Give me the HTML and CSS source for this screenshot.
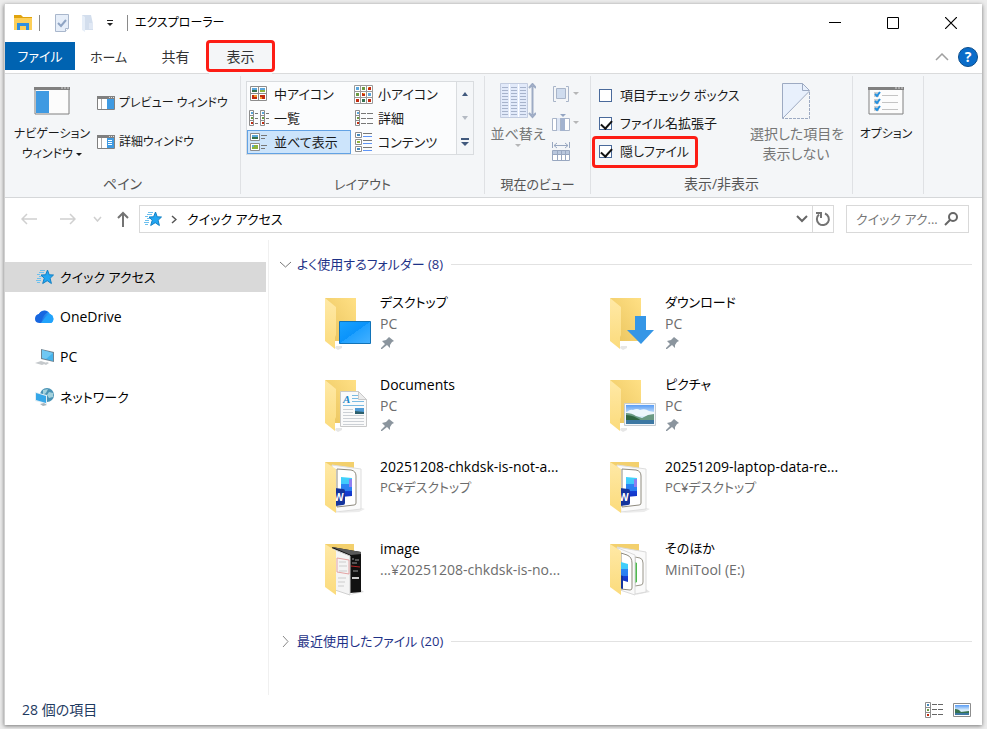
FILE: index.html
```html
<!DOCTYPE html>
<html lang="ja">
<head>
    <meta charset="UTF-8">
    <meta name="viewport" content="width=device-width, initial-scale=1.0">
    <title>エクスプローラー</title>
    <link rel="stylesheet" href="styles.css">
</head>
<body>
    <!-- shared icon shapes -->
    <svg class="defs" width="0" height="0" aria-hidden="true">
        <defs>
            <linearGradient id="back" x1="0" y1="1" x2="1" y2="0">
                <stop offset="0" stop-color="#e9c35c"/>
                <stop offset="1" stop-color="#ffe085"/>
            </linearGradient>
            <linearGradient id="flap" x1="0" y1="0" x2="0" y2="1">
                <stop offset="0" stop-color="#ffe9a6"/>
                <stop offset="1" stop-color="#fbdb7c"/>
            </linearGradient>
            <linearGradient id="screen" x1="0" y1="0" x2="1" y2="1">
                <stop offset="0" stop-color="#1aa3ff"/>
                <stop offset="0.5" stop-color="#0a93fb"/>
                <stop offset="0.5" stop-color="#1fa0ff"/>
                <stop offset="1" stop-color="#45b1ff"/>
            </linearGradient>
            <linearGradient id="sky" x1="0" y1="0" x2="0" y2="1">
                <stop offset="0" stop-color="#5a9df5"/>
                <stop offset="0.5" stop-color="#d8ecfa"/>
            </linearGradient>
            <linearGradient id="sheet" x1="0" y1="0" x2="0" y2="1">
                <stop offset="0" stop-color="#41d3fb"/>
                <stop offset="0.35" stop-color="#41c8fb"/>
                <stop offset="0.35" stop-color="#2b86f4"/>
                <stop offset="0.68" stop-color="#2b7df0"/>
                <stop offset="0.68" stop-color="#1741d6"/>
                <stop offset="1" stop-color="#1233c4"/>
            </linearGradient>
            <linearGradient id="cloud" x1="0" y1="0" x2="1" y2="0">
                <stop offset="0" stop-color="#1b55d8"/>
                <stop offset="1" stop-color="#2fb4ff"/>
            </linearGradient>
        </defs>
        <symbol id="folder" viewBox="0 0 48 54">
            <path d="M10 50l3 2 4-2v-2h-6z" fill="#e6e6e6"/>
            <path d="M0 0h31v43H10z" fill="url(#back)"/>
            <path d="M0 0l11 9v28l-1 2v12L0 43z" fill="url(#flap)"/>
        </symbol>
        <symbol id="folder-full" viewBox="0 0 48 54">
            <path d="M0 0h29v10H0z" fill="#f3d06d"/>
        </symbol>
        <symbol id="folder-flap" viewBox="0 0 48 54">
            <path d="M0 0l11 7v44L0 43z" fill="url(#flap)"/>
        </symbol>
        <symbol id="word" viewBox="0 0 48 54">
            <path d="M34 45l6 2-6 3-22 1z" fill="#ececec"/>
            <path d="M7 3l29 4v40l-25 3z" fill="#fafafa" stroke="#dedede"/>
            <path d="M12 7l14 1q5 1 5 6v27q0 2-2 2l-17 2z" fill="#fff" stroke="#8f8b7f"/>
            <path d="M16 15l11 1v18l-11 1z" fill="url(#sheet)"/>
            <path d="M24 17h3v8h-3z" fill="#8e7ff0"/>
            <path d="M10 26l8 1q2 0 2 2v12q0 2-2 2l-8 1z" fill="#14349d"/>
        </symbol>
        <symbol id="pin" viewBox="0 0 14 14">
            <path d="M8 1l5 4-2 1-2 3 0 3-3-3-5 4-1 0 0-1 4-4-3-3 4-1 2-2z" fill="#8b959e"/>
        </symbol>
        <symbol id="star" viewBox="0 0 18 16">
            <path d="M11.500 1l1.700 4.800 4.300.2-3.400 3.300 1.300 5.200-4.200-2.800-4.500 2.800 1.500-5.200L5 6l4.600-.2z" fill="#22a6f2" stroke="#1380c4"/>
            <path d="M4 1.500h5M3 3.500h5M1 5.500h3M3 7.500h3M1 9.500h4M0 11.500h5M1 13.500h3" stroke="#6dc0ee"/>
        </symbol>
        <symbol id="window" viewBox="0 0 36 28">
            <path d="M1 1h34v26H1z" fill="#fcfcfc" stroke="#808080"/>
            <path d="M0 0h36v3H0z" fill="#808080"/>
            <path d="M27 1h2M30 1h2M33 1h2" stroke="#d5d5d5"/>
        </symbol>
    </svg>

    <div class="window">
        <header class="titlebar">
            <svg width="20" height="18" viewBox="0 0 20 18">
                <path d="M1 1h7l2 2h9v3H1z" fill="#e0a30d"/>
                <path d="M1 4h18v12H1z" fill="#fdcf58"/>
                <path d="M4 16V9h12v7h-3v-4H7v4z" fill="#2f8fe0"/>
            </svg>
            <span class="divider first"></span>
            <button class="quick" aria-label="プロパティ">
                <svg width="16" height="18" viewBox="0 0 16 18">
                    <path d="M1.500.5h13v14l-3 3h-10z" fill="#e6eef9" stroke="#a9b7cc"/>
                    <path d="M11.500 17.500v-3h3" fill="#fff" stroke="#a9b7cc"/>
                    <path d="M4 9l3 3 5-6" fill="none" stroke="#8fa4c3" stroke-width="2"/>
                </svg>
            </button>
            <button class="quick" aria-label="新しいフォルダー">
                <svg width="14" height="18" viewBox="0 0 14 18">
                    <path d="M1 1h9l2 9v6H1z" fill="#d3deed"/>
                    <path d="M1 1l3 2v15l-3-2z" fill="#e6eef8"/>
                    <path d="M8 9h4v6H8z" fill="#e0e8f4"/>
                </svg>
            </button>
            <button class="quick" aria-label="カスタマイズ">
                <svg width="8" height="6" viewBox="0 0 8 6">
                    <path d="M1 .5h6" stroke="#222"/>
                    <path d="M1 3h6L4 6z" fill="#222"/>
                </svg>
            </button>
            <span class="divider"></span>
            <h1>エクスプローラー</h1>
            <div class="controls">
                <button aria-label="最小化"><svg width="12" height="12"><path d="M0 5.500h12" stroke="#000"/></svg></button>
                <button aria-label="最大化"><svg width="12" height="12"><path d="M.5.5h11v11H.5z" fill="none" stroke="#000"/></svg></button>
                <button aria-label="閉じる"><svg width="12" height="12"><path d="M0 0l12 12M12 0L0 12" stroke="#000" stroke-width="1.200"/></svg></button>
            </div>
        </header>

        <nav class="tabs">
            <button class="tab file kana">ファイル</button>
            <button class="tab kana">ホーム</button>
            <button class="tab">共有</button>
            <button class="tab active marked">表示</button>
            <div class="tab-tools">
                <button aria-label="リボンの最小化"><svg width="14" height="8"><path d="M1 7l6-6 6 6" fill="none" stroke="#a0a0a0" stroke-width="1.500"/></svg></button>
                <button class="help" aria-label="ヘルプ">?</button>
            </div>
        </nav>

        <section class="ribbon">
            <div class="group panes">
                <div class="group-body">
                    <button class="large">
                        <span class="picture">
                            <svg width="36" height="28" viewBox="0 0 36 28">
                                <use href="#window"/>
                                <path d="M2 4h13v22H2z" fill="#3f9ae2"/>
                            </svg>
                        </span>
                        ナビゲーション<br>ウィンドウ<i class="arrow"></i>
                    </button>
                    <div class="small-buttons">
                        <button class="small">
                            <svg width="18" height="14" viewBox="0 0 18 14">
                                <path d="M.5.5h17v13H.5z" fill="#fff" stroke="#808080"/>
                                <path d="M0 0h18v3H0z" fill="#808080"/>
                                <path d="M4.500 3v10" stroke="#aaa"/>
                                <path d="M10 3h7v10h-7z" fill="#3f9ae2"/>
                                <path d="M12 1.500h5" stroke="#ddd" stroke-dasharray="1 1"/>
                            </svg>
                            プレビュー ウィンドウ
                        </button>
                        <button class="small">
                            <svg width="18" height="14" viewBox="0 0 18 14">
                                <path d="M.5.5h17v13H.5z" fill="#fff" stroke="#808080"/>
                                <path d="M0 0h18v3H0z" fill="#808080"/>
                                <path d="M4.500 3v10" stroke="#aaa"/>
                                <path d="M10 3h7v10h-7z" fill="#3f9ae2"/>
                                <path d="M11 5.500h4M11 7.500h4M11 9.500h4" stroke="#fff"/>
                                <path d="M12 1.500h5" stroke="#ddd" stroke-dasharray="1 1"/>
                            </svg>
                            詳細ウィンドウ
                        </button>
                    </div>
                </div>
                <h2>ペイン</h2>
            </div>

            <div class="group layout">
                <div class="group-body">
                    <div class="gallery">
                        <button>
                            <svg width="18" height="16" viewBox="0 0 18 16">
                                <path d="M.5.5h16v14H.5zM8.500.5v14M.5 7.500h16" fill="#fff" stroke="#8d8d8d"/>
                                <path d="M2 2h5v2H2zM10 2h5v2h-5z" fill="#5ba7dc"/>
                                <path d="M2 4h5v2H2z" fill="#37724f"/>
                                <path d="M10 4h5v2h-5z" fill="#8fb33c"/>
                                <path d="M2 9h5v4H2zM10 9h5v4h-5z" fill="#c22c10"/>
                                <path d="M4 9h3v2H4zM10 11h2v2h-2z" fill="#f29a2a"/>
                            </svg>
                            中アイコン
                        </button>
                        <button>
                            <svg width="19" height="19" viewBox="0 0 19 19">
                                <path d="M.5.5h18v18H.5zM6.500.5v18M12.500.5v18M.5 6.500h18M.5 12.500h18" fill="#fff" stroke="#9a9a9a"/>
                                <path d="M2 2h3v3H2zM14 8h3v3h-3z" fill="#5ba7dc"/>
                                <path d="M8 2h3v3H8zM2 8h3v3H2z" fill="#6c9b43"/>
                                <path d="M14 2h3v3h-3zM8 8h3v3H8zM2 14h3v3H2zM14 14h3v3h-3z" fill="#c22c10"/>
                                <path d="M8 14h3v3H8z" fill="#37724f"/>
                                <path d="M9 8h2v1H9zM14 2h1v1h-1z" fill="#f29a2a"/>
                            </svg>
                            小アイコン
                        </button>
                        <button>
                            <svg width="20" height="17" viewBox="0 0 20 17">
                                <path d="M.5.5h4v15h-4zM.5 5.500h4M.5 10.500h4M11.500.5h4v15h-4zM11.500 5.500h4M11.500 10.500h4" fill="#fff" stroke="#8d8d8d"/>
                                <path d="M6 3.500h3M6 8.500h3M6 13.500h3M17 3.500h3M17 8.500h3M17 13.500h3" stroke="#777"/>
                                <path d="M2 2h2v2H2zM13 2h2v2h-2z" fill="#5ba7dc"/>
                                <path d="M2 7h2v2H2zM13 7h2v2h-2z" fill="#6c9b43"/>
                                <path d="M2 12h2v2H2zM13 12h2v2h-2z" fill="#c22c10"/>
                            </svg>
                            一覧
                        </button>
                        <button>
                            <svg width="19" height="17" viewBox="0 0 19 17">
                                <path d="M1.500.5h4v15h-4zM1.500 5.500h4M1.500 10.500h4" fill="#fff" stroke="#8d8d8d"/>
                                <path d="M7 3.500h5M13 3.500h6M7 8.500h5M13 8.500h6M7 13.500h5M13 13.500h6" stroke="#777"/>
                                <path d="M3 2h2v2H3z" fill="#5ba7dc"/>
                                <path d="M3 7h2v2H3z" fill="#6c9b43"/>
                                <path d="M3 12h2v2H3z" fill="#c22c10"/>
                            </svg>
                            詳細
                        </button>
                        <button class="selected">
                            <svg width="18" height="19" viewBox="0 0 18 19">
                                <path d="M.5.5h9v7h-9zM.5 10.500h9v7h-9z" fill="#fff" stroke="#8d8d8d"/>
                                <path d="M2 2h6v2H2z" fill="#5ba7dc"/>
                                <path d="M2 4h6v2H2z" fill="#37724f"/>
                                <path d="M2 12h6v4H2z" fill="#8fb33c"/>
                                <path d="M2 12h2v2H2z" fill="#5ba7dc"/>
                                <path d="M11 2.500h6M11 5.500h4M11 12.500h6M11 15.500h4" stroke="#777"/>
                            </svg>
                            並べて表示
                        </button>
                        <button>
                            <svg width="19" height="20" viewBox="0 0 19 20">
                                <path d="M1.500.5h6v5h-6zM1.500 7.500h6v5h-6zM1.500 14.500h6v5h-6z" fill="#fff" stroke="#8d8d8d"/>
                                <path d="M9 1.500h9M9 8.500h9M9 15.500h9" stroke="#777"/>
                                <path d="M9 4.500h9M9 11.500h9M9 18.500h9" stroke="#5f95f5"/>
                                <path d="M3 2h3v2H3zM3 16h3v2H3z" fill="#4489bb"/>
                                <path d="M3 9h3v2H3z" fill="#8fb33c"/>
                            </svg>
                            コンテンツ
                        </button>
                    </div>
                    <div class="gallery-scroll">
                        <button aria-label="前の行"><svg width="6" height="4"><path d="M0 4l3-4 3 4z" fill="#41597d"/></svg></button>
                        <button aria-label="次の行"><svg width="6" height="4"><path d="M0 0h6L3 4z" fill="#b4bac3"/></svg></button>
                        <button aria-label="その他"><svg width="8" height="8"><path d="M0 0h8v2H0zM0 4h8L4 8z" fill="#41597d"/></svg></button>
                    </div>
                </div>
                <h2 class="kana">レイアウト</h2>
            </div>

            <div class="group current">
                <div class="group-body">
                    <button class="large" disabled>
                        <span class="picture">
                            <svg width="36" height="36" viewBox="0 0 36 36">
                                <path d="M.5.5h27v34H.5z" fill="#e2eafa" stroke="#c3ccdf"/>
                                <path d="M9.500 1v33M18.500 1v33" stroke="#fff"/>
                                <path d="M2 4.500h6M11 4.500h6M20 4.500h6M2 7.500h6M11 7.500h6M20 7.500h6M2 10.500h6M11 10.500h6M20 10.500h6M2 13.500h6M11 13.500h6M20 13.500h6M2 16.500h6M11 16.500h6M20 16.500h6M2 19.500h6M11 19.500h6M20 19.500h6M2 22.500h6M11 22.500h6M20 22.500h6M2 25.500h6M11 25.500h6M20 25.500h6M2 28.500h6M11 28.500h6M20 28.500h6M2 31.500h6M11 31.500h6M20 31.500h6" stroke="#a7b3cb"/>
                                <path d="M32.500 3v29M29 5l3.500-4L36 5M29 30l3.500 4 3.500-4" fill="none" stroke="#9dabc4" stroke-width="2"/>
                            </svg>
                        </span>
                        並べ替え<br><i class="arrow below"></i>
                    </button>
                    <div class="icon-buttons">
                        <button disabled aria-label="グループ化">
                            <svg width="18" height="18" viewBox="0 0 18 18">
                                <path d="M4 1.500H1.500v15H4M14 1.500h2.500v15H14" fill="none" stroke="#a9b5c9"/>
                                <path d="M4.500 3.500h9v10h-9z" fill="#cfdcee" stroke="#a9b5c9"/>
                            </svg>
                            <i class="arrow"></i>
                        </button>
                        <button disabled aria-label="列の追加">
                            <svg width="18" height="18" viewBox="0 0 18 18">
                                <path d="M.5 4.500h17v12H.5z" fill="#fff" stroke="#a9b5c9"/>
                                <path d="M5 4h5v13H5z" fill="#dce5f4"/>
                                <path d="M9 4h4v13H9z" fill="#a3b3cf"/>
                                <path d="M4.500 4v13M8.500 4v13" stroke="#a9b5c9"/>
                                <path d="M8 0h6l-3 3z" fill="#94a5c2"/>
                            </svg>
                            <i class="arrow"></i>
                        </button>
                        <button disabled aria-label="列のサイズを自動的に変更する">
                            <svg width="18" height="20" viewBox="0 0 18 20">
                                <path d="M.5 0v6M17.500 0v6M2 3.500h14M5 1L2 3.500 5 6M13 1l3 2.500L13 6" fill="none" stroke="#98a7c0"/>
                                <path d="M.5 8.500h17v10H.5z" fill="#fff" stroke="#98a7c0"/>
                                <path d="M1 9h16v3H1z" fill="#b9c7dd"/>
                                <path d="M5.500 9v10M9.500 9v10M13.500 9v10M1 12.500h16" stroke="#98a7c0"/>
                            </svg>
                        </button>
                    </div>
                </div>
                <h2 class="kana">現在のビュー</h2>
            </div>

            <div class="group visibility">
                <div class="group-body">
                    <div class="checks">
                        <label><input type="checkbox">項目チェック ボックス</label>
                        <label><input type="checkbox" checked>ファイル名拡張子</label>
                        <label class="marked"><input type="checkbox" checked>隠しファイル</label>
                    </div>
                    <button class="large" disabled>
                        <span class="picture">
                            <svg width="28" height="36" viewBox="0 0 28 36">
                                <path d="M.5.5h20l7 7L.5 35.500z" fill="#e8f0fc"/>
                                <path d="M27.500 8L.5 35.500V.5h20l7 7h-7v-7" fill="none" stroke="#9daac2"/>
                                <path d="M27.500 9v26.500H1" fill="none" stroke="#9daac2" stroke-dasharray="3 1"/>
                            </svg>
                        </span>
                        選択した項目を<br>表示しない
                    </button>
                </div>
                <h2>表示/非表示</h2>
            </div>

            <div class="group options">
                <div class="group-body">
                    <button class="large">
                        <span class="picture">
                            <svg width="36" height="28" viewBox="0 0 36 28">
                                <use href="#window"/>
                                <path d="M14 8.500h16M14 15.500h16M14 22.500h16" stroke="#c4c4c4"/>
                                <path d="M6 5h5v5H6zM6 12h5v5H6zM6 19h5v5H6z" fill="#cfcfcf"/>
                                <path d="M7 7l2 2 3-4M7 14l2 2 3-4M7 21l2 2 3-4" fill="none" stroke="#2490df" stroke-width="2"/>
                            </svg>
                        </span>
                        オプション
                    </button>
                </div>
            </div>
        </section>

        <div class="toolbar">
            <button aria-label="戻る"><svg width="16" height="12"><path d="M16 6H1M6 1L1 6l5 5" fill="none" stroke="#d0d0d0" stroke-width="1.500"/></svg></button>
            <button aria-label="進む"><svg width="16" height="12"><path d="M0 6h15M10 1l5 5-5 5" fill="none" stroke="#d0d0d0" stroke-width="1.500"/></svg></button>
            <button class="recent" aria-label="最近表示した場所"><svg width="9" height="6"><path d="M1 1l3.500 4L8 1" fill="none" stroke="#cfcfcf" stroke-width="1.500"/></svg></button>
            <button class="up" aria-label="上へ"><svg width="12" height="16"><path d="M6 16V2M1 7l5-5 5 5" fill="none" stroke="#737373" stroke-width="2"/></svg></button>
            <div class="address">
                <svg width="18" height="16"><use href="#star"/></svg>
                <svg class="crumb" width="6" height="9"><path d="M1 1l4 3.500L1 8" fill="none" stroke="#555" stroke-width="1.500"/></svg>
                <a class="kana" href="#">クイック アクセス</a>
                <button class="history" aria-label="以前の場所"><svg width="12" height="8"><path d="M1 1l5 5 5-5" fill="none" stroke="#666" stroke-width="2"/></svg></button>
                <button class="refresh" aria-label="更新"><svg width="16" height="16"><path d="M10 2.500a6 6 0 1 1-6 1M1 2h5v5" fill="none" stroke="#737373" stroke-width="2"/></svg></button>
            </div>
            <div class="search">
                <input type="text" placeholder="クイック アク..." aria-label="検索">
                <svg width="14" height="14"><circle cx="9" cy="5" r="4" fill="none" stroke="#666" stroke-width="2"/><path d="M6 8l-5 5" stroke="#666" stroke-width="2"/></svg>
            </div>
        </div>

        <div class="content">
            <nav class="sidebar">
                <a class="current-place kana" href="#">
                    <svg width="18" height="16"><use href="#star"/></svg>
                    クイック アクセス
                </a>
                <a href="#">
                    <svg width="20" height="14" viewBox="0 0 20 14">
                        <path d="M5 13a5 5 0 0 1-1-9A6 6 0 0 1 15 4a5 5 0 0 1 1 9z" fill="url(#cloud)"/>
                        <path d="M0 9a5 5 0 0 1 4-5A6 6 0 0 1 13 2Q8 5 7 10q-1 3-2 3-5 0-5-4z" fill="#1767e0"/>
                        <path d="M6 13q6-9 9-9a5 5 0 0 1 1 9z" fill="#22a3fb"/>
                    </svg>
                    OneDrive
                </a>
                <a href="#">
                    <svg width="20" height="17" viewBox="0 0 20 17">
                        <path d="M6 0l13 3v10L6 10z" fill="#708492"/>
                        <path d="M7 1l11 3v8L7 9z" fill="#45b3ec"/>
                        <path d="M7 1l11 3-7 6-4-1z" fill="#70c8f3"/>
                        <path d="M0 14l6-2 6 2-5 2zM9 15l3-2 2 1-3 2z" fill="#c5c9cc"/>
                    </svg>
                    PC
                </a>
                <a class="kana" href="#">
                    <svg width="20" height="18" viewBox="0 0 20 18">
                        <circle cx="12" cy="7" r="7" fill="#4a93b5"/>
                        <path d="M8 2l5-1-2 4-3 2zM14 4l4 1v4l-4 1-2-3z" fill="#a3d1dc"/>
                        <path d="M0 4l12 3v9L0 13z" fill="#e2eef4"/>
                        <path d="M1 5l10 3v7L1 12z" fill="#36a7e8"/>
                        <path d="M5 16l4-1 3 2-4 1z" fill="#a7b4bb"/>
                    </svg>
                    ネットワーク
                </a>
            </nav>

            <main>
                <button class="section-title">
                    <svg width="11" height="11"><path d="M0 3l5.500 5L11 3" fill="none" stroke="#777"/></svg>
                    よく使用するフォルダー (8)
                </button>
                <div class="tiles">
                    <a class="tile" href="#">
                        <svg width="48" height="54" viewBox="0 0 48 54">
                            <use href="#folder"/>
                            <path d="M14.500 23.500h31v22h-31z" fill="url(#screen)" stroke="#1173b8"/>
                        </svg>
                        <span><b class="kana">デスクトップ</b><small>PC</small><svg width="14" height="14"><use href="#pin"/></svg></span>
                    </a>
                    <a class="tile" href="#">
                        <svg width="48" height="54" viewBox="0 0 48 54">
                            <use href="#folder"/>
                            <path d="M25 18h11v14h8L31 46 17 32h8z" fill="#3596e6"/>
                        </svg>
                        <span><b class="kana">ダウンロード</b><small>PC</small><svg width="14" height="14"><use href="#pin"/></svg></span>
                    </a>
                    <a class="tile" href="#">
                        <svg width="48" height="54" viewBox="0 0 48 54">
                            <use href="#folder"/>
                            <path d="M15.500 11.500h18l8 8v27h-26z" fill="#fafafa" stroke="#c9c9c9"/>
                            <path d="M33.500 11.500v8h8z" fill="#ececec" stroke="#c9c9c9"/>
                            <text x="18" y="23" font-size="11" font-weight="700" font-style="italic" font-family="Liberation Serif" fill="#1a86c9">A</text>
                            <path d="M27 15.500h6M27 18.500h6M27 21.500h12M18 25.500h21" stroke="#7bbbe2"/>
                            <path d="M18 29.500h10M18 32.500h10M18 35.500h21M18 38.500h21M18 41.500h21M18 44.500h21" stroke="#ccd0d5"/>
                            <path d="M30 28h9v6h-9z" fill="#4f9bd6"/>
                            <path d="M30 31l9 1v2h-9z" fill="#2d5f6b"/>
                        </svg>
                        <span><b>Documents</b><small>PC</small><svg width="14" height="14"><use href="#pin"/></svg></span>
                    </a>
                    <a class="tile" href="#">
                        <svg width="48" height="54" viewBox="0 0 48 54">
                            <use href="#folder"/>
                            <path d="M14.500 23.500h31v22h-31z" fill="#f3f6f9" stroke="#c5ccd2"/>
                            <path d="M16 25h28v19H16z" fill="url(#sky)"/>
                            <path d="M17 32q3-3 6-2 4-2 7 0 5-2 9 1l5 1v4H16v-4z" fill="#edf6fc"/>
                            <path d="M16 33q6 0 10 3l6 2 6-3 6-1v7H16z" fill="#6b9a84"/>
                            <path d="M16 35q8 0 16 6H16z" fill="#2f6540"/>
                            <path d="M16 40h28v4H16z" fill="#3d78a3"/>
                        </svg>
                        <span><b class="kana">ピクチャ</b><small>PC</small><svg width="14" height="14"><use href="#pin"/></svg></span>
                    </a>
                    <a class="tile" href="#">
                        <svg width="48" height="54" viewBox="0 0 48 54">
                            <use href="#folder-full"/>
                            <use href="#word"/>
                            <text x="9" y="39" font-size="10" font-weight="700" fill="#fff">W</text>
                            <use href="#folder-flap"/>
                        </svg>
                        <span><b>20251208-chkdsk-is-not-a...</b><small class="kana">PC¥デスクトップ</small></span>
                    </a>
                    <a class="tile" href="#">
                        <svg width="48" height="54" viewBox="0 0 48 54">
                            <use href="#folder-full"/>
                            <use href="#word"/>
                            <text x="9" y="39" font-size="10" font-weight="700" fill="#fff">W</text>
                            <use href="#folder-flap"/>
                        </svg>
                        <span><b>20251209-laptop-data-re...</b><small class="kana">PC¥デスクトップ</small></span>
                    </a>
                    <a class="tile" href="#">
                        <svg width="48" height="54" viewBox="0 0 48 54">
                            <use href="#folder-full"/>
                            <path d="M25 51l14-3-4-3z" fill="#ddd"/>
                            <path d="M7 3l29 5v40l-11 1z" fill="#111"/>
                            <path d="M7 3l29 5v2l-10 1z" fill="#5a5a5a"/>
                            <path d="M27 15h2M30 16h4M27 19h5M28 27h5" stroke="#999"/>
                            <path d="M26 22l9 1" stroke="#b52525"/>
                            <path d="M27 34h7" stroke="#ccc" stroke-width="2"/>
                            <path d="M8 5l17 7v39l-15-5z" fill="#f4f4f4" stroke="#d0d0d0"/>
                            <path d="M12 14l12 2v14l-12-2z" fill="none" stroke="#e3a3a3"/>
                            <path d="M14 18h7M14 22h8M14 27h8M13 34h8M13 38h7M13 42h6" stroke="#ccc"/>
                            <use href="#folder-flap"/>
                        </svg>
                        <span><b>image</b><small>...¥20251208-chkdsk-is-no...</small></span>
                    </a>
                    <a class="tile" href="#">
                        <svg width="48" height="54" viewBox="0 0 48 54">
                            <use href="#folder-full"/>
                            <path d="M25 51l15-3-4-3z" fill="#e3e3e3"/>
                            <path d="M7 3l29 5v40l-11 2z" fill="#fafafa" stroke="#dadada"/>
                            <path d="M25 13l5 1q3 1 3 5v19q0 3-2 3l-6 1z" fill="#fff" stroke="#99968b"/>
                            <path d="M25 18l2 1v19l-2 1z" fill="#4fb84e"/>
                            <path d="M8 4l17 7v40l-15-5z" fill="#fafafa" stroke="#dadada"/>
                            <path d="M11 9l6 2q5 2 5 8v25q0 2-2 2l-9-1z" fill="#fff" stroke="#8f8b7f"/>
                            <path d="M11 18l7 2v18l-7-2z" fill="url(#sheet)"/>
                            <path d="M10 31l3 1v13l-3-1z" fill="#14349d"/>
                            <use href="#folder-flap"/>
                        </svg>
                        <span><b class="kana">そのほか</b><small>MiniTool (E:)</small></span>
                    </a>
                </div>
                <button class="section-title">
                    <svg width="11" height="11"><path d="M3 0l5 5.500L3 11" fill="none" stroke="#888"/></svg>
                    最近使用したファイル (20)
                </button>
            </main>
        </div>

        <footer class="status">
            <p>28 個の項目</p>
            <button aria-label="詳細表示">
                <svg width="18" height="16" viewBox="0 0 18 16">
                    <path d="M.5.5h5v15h-5zM.5 5.500h5M.5 10.500h5" fill="#fff" stroke="#8d8d8d"/>
                    <path d="M7 2.500h5M13 2.500h5M7 7.500h5M13 7.500h5M7 12.500h5M13 12.500h5" stroke="#666"/>
                    <path d="M2 2h2v2H2z" fill="#4489bb"/>
                    <path d="M2 7h2v2H2z" fill="#6c9b43"/>
                    <path d="M2 12h2v2H2z" fill="#c22c10"/>
                </svg>
            </button>
            <button aria-label="大きい縮小版">
                <svg width="18" height="14" viewBox="0 0 18 14">
                    <path d="M.5.5h17v13H.5z" fill="#fff" stroke="#8d8d8d"/>
                    <path d="M2 2h14v10H2z" fill="url(#sky)"/>
                    <path d="M2 6q4 0 6 3l8-1v2H2z" fill="#37724f"/>
                    <path d="M2 10h14v2H2z" fill="#3d78a3"/>
                </svg>
            </button>
        </footer>
    </div>
</body>
</html>
```

FILE: styles.css
```css
* {
    box-sizing: border-box;
}
body {
    margin: 0;
    padding: 4px 5px 4px 4px;
    min-height: 100vh;
    display: flex;
    background-color: #ececec;
    font-family: "Open Sans", "Noto Sans CJK JP", sans-serif;
    font-size: 14px;
    line-height: 20px;
    font-feature-settings: "palt";
    color: #1a1a1a;
}
svg {
    display: block;
    flex: none;
}
.defs {
    position: absolute;
}
button {
    display: flex;
    align-items: center;
    justify-content: center;
    padding: 0;
    border: none;
    background: none;
    font: inherit;
    font-feature-settings: inherit;
    color: inherit;
    white-space: nowrap;
}
button:disabled {
    color: #767676;
}
a {
    color: inherit;
    text-decoration: none;
}
h1, h2, p {
    margin: 0;
    font-size: 14px;
    font-weight: normal;
}
.window {
    flex: 1;
    min-width: 0;
    display: flex;
    flex-direction: column;
    background-color: #fff;
    border-left: 1px solid #d0d0d0;
    box-shadow: 0 1px 4px rgba(0, 0, 0, 0.5);
}

/* title bar */
.titlebar {
    display: flex;
    align-items: center;
    height: 38px;
    padding-left: 8px;
}
.divider {
    width: 1px;
    height: 16px;
    margin: 0 7px 0 13px;
    background-color: #8a8a8a;
}
.divider.first {
    margin: 0 8px 0 6px;
}
.quick {
    margin-left: 6px;
}
.quick + .quick {
    margin-left: 11px;
}
.titlebar h1 {
    font-size: 12px;
    color: #000;
}
.controls {
    display: flex;
    margin-left: auto;
    padding-right: 2px;
}
.controls button {
    width: 58px;
    height: 38px;
}

/* tabs */
.tabs {
    display: flex;
    height: 32px;
    border-bottom: 1px solid #dadbdc;
}
.tab {
    position: relative;
    width: 67px;
    height: 30px;
    color: #333;
}
.tab.file {
    width: 70px;
    height: 28px;
    background-color: #0063b1;
    color: #fff;
}
.tab.active {
    width: 63px;
    height: 32px;
    padding-bottom: 2px;
    background-color: #f4f6f8;
}
.marked::after {
    content: "";
    position: absolute;
    border: 3px solid #fd1d15;
    border-radius: 4px;
}
.tab.marked::after {
    inset: -2px -3px 2px;
}
.tab-tools {
    display: flex;
    align-items: center;
    gap: 9px;
    margin-left: auto;
    padding: 0 4px 1px 0;
}
.help {
    width: 20px;
    height: 20px;
    border: 1px solid #0b4d8c;
    border-radius: 50%;
    background-color: #0a6cc9;
    color: #fff;
    font-weight: bold;
}

/* ribbon */
.ribbon {
    display: flex;
    height: 124px;
    padding: 2px 0 3px;
    background-color: #f4f6f8;
    border-bottom: 1px solid #d5d7d9;
}
.group {
    display: flex;
    flex-direction: column;
    border-right: 1px solid #dfe1e4;
}
.group h2 {
    text-align: center;
    color: #555;
}
.group-body {
    display: flex;
    align-items: flex-start;
    flex: 1;
    padding-top: 5px;
}
.panes {
    width: 236px;
}
.layout {
    width: 244px;
}
.current {
    width: 106px;
}
.visibility {
    width: 262px;
}
.options {
    width: 71px;
}
.large {
    display: block;
    min-width: 64px;
    text-align: center;
}
.picture {
    display: flex;
    align-items: center;
    justify-content: center;
    height: 40px;
    margin-bottom: 3px;
}
.arrow {
    display: inline-block;
    margin-left: 3px;
    border: 3px solid transparent;
    border-top-color: currentColor;
    border-bottom: none;
    vertical-align: middle;
}
.arrow.below {
    display: block;
    width: 6px;
    margin: 0 auto;
    opacity: 0.5;
}
.panes .large {
    width: 94px;
    font-size: 12px;
}
.small-buttons {
    display: flex;
    flex-direction: column;
    gap: 19px;
    padding-top: 12px;
}
.small {
    justify-content: flex-start;
    gap: 4px;
    font-size: 12px;
}
.panes .small-buttons {
    margin-left: -2px;
}
.layout .group-body {
    padding-left: 5px;
}
.gallery {
    display: grid;
    grid-template-columns: 104px 105px;
    grid-auto-rows: 24px;
    border: 1px solid #d9dcdf;
    border-right: none;
    background-color: #fbfcfd;
}
.gallery button {
    display: grid;
    grid-template-columns: 20px 1fr;
    justify-items: start;
    gap: 5px;
    padding-left: 1px;
    border: 1px solid transparent;
    font-size: 13px;
}
.gallery svg {
    justify-self: center;
}
.gallery .selected {
    background-color: #cce4fb;
    border-color: #62a2e4;
}
.gallery-scroll {
    display: grid;
    grid-auto-rows: 24px;
    border: 1px solid #d9dcdf;
}
.gallery-scroll button {
    width: 16px;
}
.current .large {
    width: 66px;
}
.icon-buttons {
    display: flex;
    flex-direction: column;
    align-items: flex-start;
    gap: 10px;
    padding: 3px 0 0 1px;
}
.icon-buttons button {
    height: 19px;
}
.icon-buttons .arrow {
    opacity: 0.5;
}
.checks {
    display: flex;
    flex-direction: column;
    padding-left: 8px;
    width: 159px;
}
.checks label {
    position: relative;
    display: flex;
    align-items: center;
    gap: 8px;
    height: 28px;
    font-size: 13px;
    white-space: nowrap;
}
.checks .marked::after {
    inset: -1px 52px -3px -7px;
}
input[type="checkbox"] {
    appearance: none;
    width: 13px;
    height: 13px;
    margin: 0;
    border: 1px solid #4a6a9b;
    background-color: #fff;
}
input[type="checkbox"]:checked::before {
    content: "";
    display: block;
    width: 9px;
    height: 5px;
    margin: 2px 1px;
    border: solid #111;
    border-width: 0 0 2px 2px;
    transform: rotate(-48deg);
}
.visibility .large {
    width: 92px;
}
.options .large {
    width: 66px;
    font-size: 12px;
}

/* address bar */
.toolbar {
    display: flex;
    align-items: center;
    height: 42px;
    padding: 0 13px 0 16px;
}
.toolbar > button {
    margin-right: 23px;
}
.toolbar > .recent {
    margin: 0 15px 0 -6px;
}
.toolbar > .up {
    margin: 0 10px 0 0;
}
.address {
    display: flex;
    align-items: center;
    flex: 1;
    height: 28px;
    margin-right: 12px;
    padding-left: 4px;
    border: 1px solid #d9d9d9;
    color: #000;
}
.crumb {
    margin: 0 10px 0 9px;
}
.history {
    margin-left: auto;
    width: 20px;
    height: 26px;
}
.refresh {
    width: 21px;
    height: 26px;
    border-left: 1px solid #d9d9d9;
}
.search {
    display: flex;
    align-items: center;
    width: 123px;
    height: 28px;
    padding: 0 10px 0 9px;
    border: 1px solid #d9d9d9;
}
.search input {
    flex: 1;
    min-width: 0;
    padding: 0;
    border: none;
    outline: none;
    font: inherit;
    font-size: 13px;
    font-feature-settings: inherit;
}
.search input::placeholder {
    color: #777;
}

/* content */
.content {
    display: flex;
    flex: 1;
}
.sidebar {
    width: 264px;
    padding: 22px 2px 0 0;
    border-right: 1px solid #f0f0f0;
}
.sidebar a {
    display: grid;
    grid-template-columns: 20px 1fr;
    align-items: center;
    gap: 5px;
    height: 30px;
    margin-bottom: 10px;
    padding-left: 30px;
    color: #000;
}
.sidebar .current-place {
    background-color: #d9d9d9;
}
.sidebar a svg {
    justify-self: center;
}
main {
    flex: 1;
    min-width: 0;
    padding: 14px 10px 0 11px;
}
.section-title {
    width: 100%;
    gap: 6px;
    font-size: 13px;
    color: #1e3287;
}
.section-title::after {
    content: "";
    flex: 1;
    height: 1px;
    margin-left: 2px;
    background-color: #e2e2e2;
}
.tiles {
    display: grid;
    grid-template-columns: 285px 285px;
    grid-auto-rows: 82px;
    padding: 18px 0 11px 45px;
}
.tile {
    display: flex;
    align-items: flex-start;
    gap: 7px;
    padding-top: 6px;
}
.tile span {
    margin-top: -6px;
}
.tile b, .tile small {
    display: block;
    font-size: 14px;
    font-weight: normal;
    line-height: 21px;
    white-space: nowrap;
    color: #000;
}
.tile small {
    color: #6d6d6d;
}
.tile span svg {
    margin: 2px 0 0 1px;
}

.kana, .tile .kana, .group .kana {
    font-size: 13px;
}

/* status bar */
.status {
    display: flex;
    align-items: center;
    gap: 10px;
    height: 30px;
    padding: 0 11px 0 17px;
    color: #1e3a5f;
}
.status p {
    margin-right: auto;
}
```
